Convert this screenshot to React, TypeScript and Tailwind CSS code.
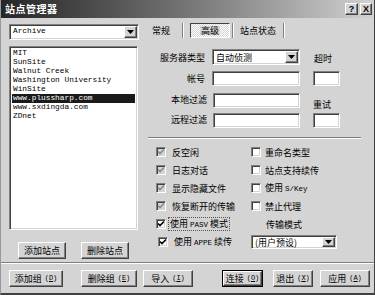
import React from 'react';

const sunken =
  'border border-[#808080] border-r-white border-b-white shadow-[inset_1px_1px_0_#404040,inset_-1px_-1px_0_#d4d4d4]';
const raised =
  'border border-white border-r-[#404040] border-b-[#404040] shadow-[inset_-1px_-1px_0_#808080] bg-[#d4d4d4]';
const mono = "font-['Liberation_Mono',monospace]";

const sites = [
  'MIT',
  'SunSite',
  'Walnut Creek',
  'Washington University',
  'WinSite',
  'www.plussharp.com',
  'www.sxdingda.com',
  'ZDnet',
];

const Arrow: React.FC = () => (
  <svg width="7" height="4" viewBox="0 0 7 4">
    <path d="M0 0h7L3.5 4z" fill="#000" />
  </svg>
);

const DropButton: React.FC = () => (
  <div className={`${raised} w-[13px] self-stretch flex items-center justify-center`}>
    <Arrow />
  </div>
);

type BoxState = 'disabled' | 'checked' | 'empty';

const CheckBox: React.FC<{ state: BoxState }> = ({ state }) => (
  <div
    className={`${sunken} w-[10px] h-[10px] shrink-0 flex items-center justify-center ${
      state === 'disabled' ? 'bg-[#d4d4d4]' : 'bg-white'
    }`}
  >
    {state !== 'empty' && (
      <svg width="8" height="8" viewBox="0 0 8 8">
        <path
          d="M1 3.5L3 5.5L7 1.5"
          fill="none"
          stroke={state === 'disabled' ? '#8a8a8a' : '#000'}
          strokeWidth="1.6"
        />
      </svg>
    )}
  </div>
);

// label with the hotkey letter underlined, e.g. 添加组 (D)
const HotLabel: React.FC<{ text: string; hot: string }> = ({ text, hot }) => (
  <span className="flex items-center">
    {text}
    <span className={`${mono} text-[7px] ml-[3px]`}>
      (<span className="underline">{hot}</span>)
    </span>
  </span>
);

const Btn: React.FC<{ className?: string; children: React.ReactNode; def?: boolean }> = ({
  className = '',
  children,
  def,
}) => (
  <div className={`${def ? 'border border-black' : ''} ${className} h-[17px] flex`}>
    <div className={`${raised} flex-1 flex items-center justify-center text-[9px] leading-none`}>
      {children}
    </div>
  </div>
);

const TabSep: React.FC = () => (
  <div className="w-[2px] h-[15px] border-l border-[#808080] border-r border-r-white" />
);

const App: React.FC = () => {
  return (
    <div className="w-[375px] h-[295px] overflow-hidden bg-[#d4d4d4] flex flex-col border-l border-l-[#9a9a9a] border-r border-r-[#404040] border-b-2 border-b-[#404040] font-['Noto_Sans_CJK_SC',sans-serif] text-black leading-none">
      {/* title bar */}
      <div className="h-[18px] shrink-0 flex items-center bg-gradient-to-r from-[#262626] to-[#d2d2d2] pl-[4px] pr-[2px]">
        <span className="text-white font-bold text-[10px] tracking-[0.5px]">站点管理器</span>
        <div className="ml-auto flex gap-[2px]">
          <div className={`${raised} w-[13px] h-[12px] flex items-center justify-center text-[9px] font-bold font-['Liberation_Sans',sans-serif]`}>
            ?
          </div>
          <div className={`${raised} w-[12px] h-[12px] flex items-center justify-center text-[9px] font-bold font-['Liberation_Sans',sans-serif]`}>
            X
          </div>
        </div>
      </div>

      {/* main */}
      <div className="h-[244px] shrink-0 flex">
        {/* left column */}
        <div className="w-[139px] pl-[8px] pr-[1px] pt-[6px] flex flex-col">
          <div className={`${sunken} bg-white h-[16px] flex items-stretch p-[1px]`}>
            <span className={`${mono} text-[7.8px] flex-1 flex items-center pl-[2px]`}>Archive</span>
            <DropButton />
          </div>
          <div className={`${sunken} bg-white mt-[6px] h-[184px] w-[129px] p-[2px] pt-[2px]`}>
            {sites.map((s) => (
              <div
                key={s}
                className={`${mono} text-[7.8px] h-[9px] flex items-center pl-[1px] ${
                  s === 'www.plussharp.com' ? 'bg-[#1a1a1a] text-white' : ''
                }`}
              >
                {s}
              </div>
            ))}
          </div>
          <div className="mt-[12px] flex pl-[9px] gap-[15px]">
            <Btn className="w-[48px]">添加站点</Btn>
            <Btn className="w-[48px]">删除站点</Btn>
          </div>
        </div>

        {/* right column */}
        <div className="flex-1 flex flex-col text-[9px]">
          {/* tabs */}
          <div className="mt-[5px] h-[15px] flex items-center pl-[12px]">
            <span className="w-[30px]">常规</span>
            <TabSep />
            <div className="w-[6px]" />
            <div className="w-[40px] h-[15px] border border-[#404040] border-r-white border-b-white bg-[repeating-conic-gradient(#ffffff_0_25%,#d4d4d4_0_50%)] bg-[length:2px_2px] flex items-center justify-center">
              <span className="bg-[#d4d4d4] px-[1px]">高级</span>
            </div>
            <div className="w-[2px]" />
            <TabSep />
            <div className="w-[6px]" />
            <span className="w-[43px]">站点状态</span>
            <TabSep />
          </div>

          {/* form */}
          <div className="mt-[11px] flex items-center h-[16px]">
            <span className="w-[65px] text-right">服务器类型</span>
            <div className={`${sunken} bg-white ml-[7px] w-[88px] h-[16px] flex p-[1px]`}>
              <span className="flex-1 flex items-center pl-[2px]">自动侦测</span>
              <DropButton />
            </div>
            <span className="ml-[14px] pt-[2px]">超时</span>
          </div>
          <div className="mt-[6px] flex items-center h-[15px]">
            <span className="w-[65px] text-right">帐号</span>
            <div className={`${sunken} bg-white ml-[7px] w-[88px] h-[15px]`} />
            <div className={`${sunken} bg-white ml-[13px] w-[27px] h-[15px]`} />
          </div>
          <div className="mt-[7px] flex items-center h-[15px]">
            <span className="w-[67px] text-right pb-[3px]">本地过滤</span>
            <div className={`${sunken} bg-white ml-[6px] w-[87px] h-[15px]`} />
            <span className="ml-[13px] self-end -mb-[1px]">重试</span>
          </div>
          <div className="mt-[5px] flex items-center h-[15px]">
            <span className="w-[67px] text-right pb-[3px]">远程过滤</span>
            <div className={`${sunken} bg-white ml-[6px] w-[87px] h-[15px]`} />
            <div className={`${sunken} bg-white ml-[13px] w-[27px] h-[15px]`} />
          </div>

          <div className="mt-[9px] ml-[8px] w-[213px] h-[2px] border-t border-[#808080] border-b border-b-white" />

          {/* options */}
          <div className="mt-[4px] grid grid-cols-[111px_1fr] auto-rows-[18px] items-center">
            <div className="flex items-center pl-[16px] gap-[6px]">
              <CheckBox state="disabled" />
              <span>反空闲</span>
            </div>
            <div className="flex items-center gap-[4px]">
              <CheckBox state="empty" />
              <span>重命名类型</span>
            </div>
            <div className="flex items-center pl-[16px] gap-[6px]">
              <CheckBox state="disabled" />
              <span>日志对话</span>
            </div>
            <div className="flex items-center gap-[4px]">
              <CheckBox state="empty" />
              <span>站点支持续传</span>
            </div>
            <div className="flex items-center pl-[16px] gap-[6px]">
              <CheckBox state="disabled" />
              <span>显示隐藏文件</span>
            </div>
            <div className="flex items-center gap-[4px]">
              <CheckBox state="empty" />
              <span>
                使用 <span className={`${mono} text-[7.5px]`}>S/Key</span>
              </span>
            </div>
            <div className="flex items-center pl-[16px] gap-[6px]">
              <CheckBox state="disabled" />
              <span>恢复断开的传输</span>
            </div>
            <div className="flex items-center gap-[4px]">
              <CheckBox state="empty" />
              <span>禁止代理</span>
            </div>
            <div className="flex items-center pl-[16px] gap-[2px]">
              <CheckBox state="checked" />
              <span className="border border-dotted border-[#555] px-[1px] py-[1px]">
                使用 <span className={`${mono} text-[7.5px]`}>PASV</span> 模式
              </span>
            </div>
            <div className="pl-[15px]">传输模式</div>
            <div className="flex items-center pl-[18px] gap-[6px]">
              <CheckBox state="checked" />
              <span>
                使用 <span className={`${mono} text-[7.5px]`}>APPE</span> 续传
              </span>
            </div>
            <div className={`${sunken} bg-white w-[86px] h-[14px] flex p-[1px]`}>
              <span className="flex-1 flex items-center pl-[2px]">(用户预设)</span>
              <DropButton />
            </div>
          </div>
        </div>
      </div>

      {/* bottom separator */}
      <div className="h-[2px] shrink-0 border-t border-[#808080] border-b border-b-white" />

      {/* bottom buttons */}
      <div className="mt-[6px] flex pl-[8px]">
        <Btn className="w-[54px]">
          <HotLabel text="添加组" hot="D" />
        </Btn>
        <Btn className="w-[56px] ml-[18px]">
          <HotLabel text="删除组" hot="E" />
        </Btn>
        <Btn className="w-[50px] ml-[6px]">
          <HotLabel text="导入" hot="I" />
        </Btn>
        <Btn className="w-[41px] ml-[29px]" def>
          <HotLabel text="连接" hot="O" />
        </Btn>
        <Btn className="w-[40px] ml-[10px]">
          <HotLabel text="退出" hot="X" />
        </Btn>
        <Btn className="w-[50px] ml-[7px]">
          <HotLabel text="应用" hot="A" />
        </Btn>
      </div>
    </div>
  );
};

export default App;
